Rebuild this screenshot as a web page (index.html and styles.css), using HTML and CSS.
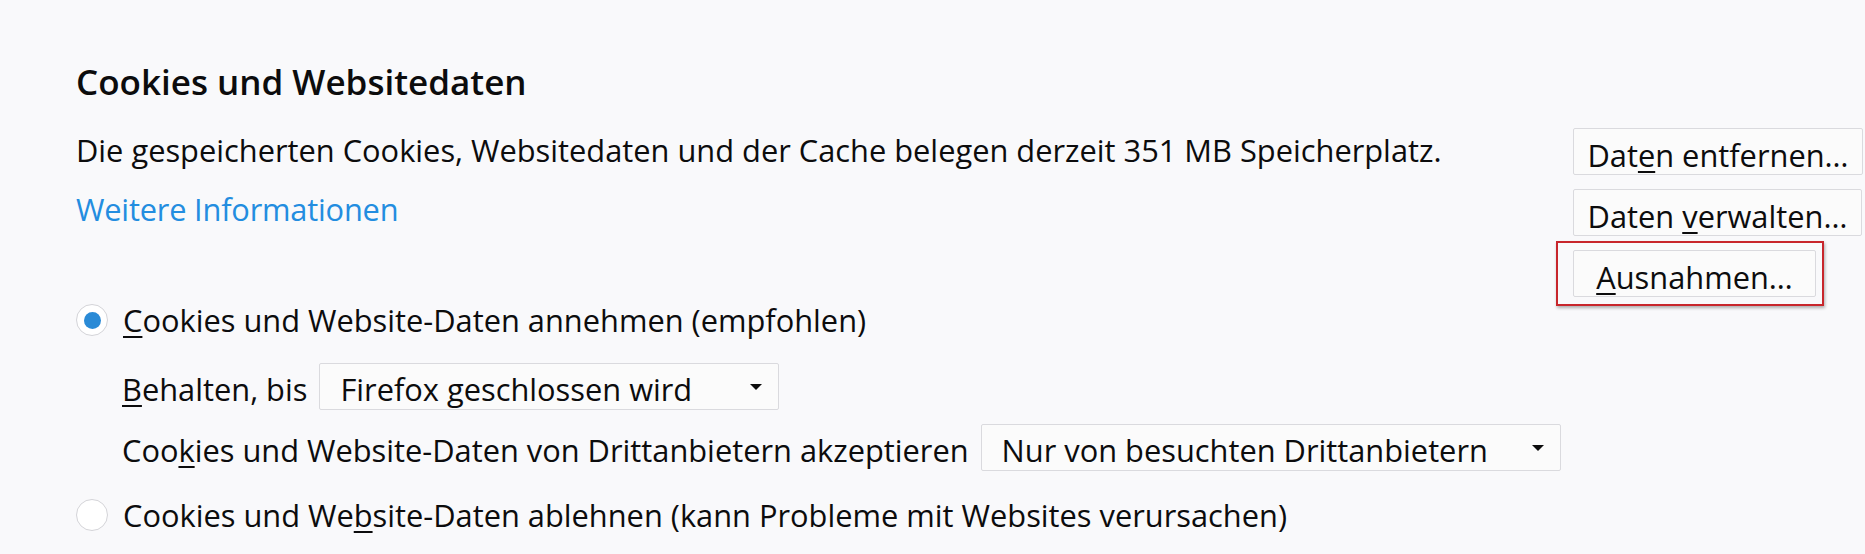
FILE: index.html
```html
<!DOCTYPE html>
<html lang="de">
<head>
<meta charset="utf-8">
<title>Cookies und Websitedaten</title>
<link rel="stylesheet" href="styles.css">
</head>
<body>
<section class="pane">
  <h2 class="pane-title">Cookies und Websitedaten</h2>
  <div class="summary">
    <div class="summary-text">
      <p class="desc">Die gespeicherten Cookies, Websitedaten und der Cache belegen derzeit 351 MB Speicherplatz.</p>
      <a class="link" href="#">Weitere Informationen</a>
    </div>
    <div class="actions">
      <button class="btn btn-wide">Dat<u>e</u>n entfernen…</button>
      <button class="btn btn-wide2">Daten <u>v</u>erwalten…</button>
      <div class="highlight">
        <button class="btn btn-narrow"><u>A</u>usnahmen…</button>
      </div>
    </div>
  </div>
  <div class="options">
    <label class="radio-row">
      <span class="radio checked"></span>
      <span class="radio-label"><u>C</u>ookies und Website-Daten annehmen (empfohlen)</span>
    </label>
    <div class="sub-row sub-first">
      <span class="sub-label"><u>B</u>ehalten, bis</span>
      <div class="dropdown dd-keep">
        <span class="dd-value">Firefox geschlossen wird</span>
        <svg class="dd-arrow" viewBox="0 0 12 6" width="12" height="6"><path d="M0 0h12L6 6z"/></svg>
      </div>
    </div>
    <div class="sub-row">
      <span class="sub-label">Coo<u>k</u>ies und Website-Daten von Drittanbietern akzeptieren</span>
      <div class="dropdown dd-third">
        <span class="dd-value">Nur von besuchten Drittanbietern</span>
        <svg class="dd-arrow" viewBox="0 0 12 6" width="12" height="6"><path d="M0 0h12L6 6z"/></svg>
      </div>
    </div>
    <label class="radio-row radio-last">
      <span class="radio"></span>
      <span class="radio-label">Cookies und We<u>b</u>site-Daten ablehnen (kann Probleme mit Websites verursachen)</span>
    </label>
  </div>
</section>
</body>
</html>
```

FILE: styles.css
```css
html, body {
  margin: 0;
  padding: 0;
}
body {
  background: #f9f9fb;
  color: #0c0c0d;
  font-family: "Open Sans", "Noto Sans", sans-serif;
  font-size: 30.8px;
  line-height: 40px;
  overflow: hidden;
}
u {
  text-decoration-thickness: 2px;
  text-underline-offset: 4px;
}
.pane {
  padding: 62px 0 0 76px;
}
.pane-title {
  margin: 0;
  font-size: 35px;
  font-weight: 600;
  line-height: 40px;
}
.summary {
  display: flex;
  margin-top: 26px;
}
.summary-text {
  flex: 1;
  padding-top: 2px;
}
.desc {
  margin: 0 0 19px;
}
.link {
  color: #238de0;
  text-decoration: none;
  letter-spacing: -0.2px;
}
.actions {
  width: 290px;
  margin-right: 2px;
  display: flex;
  flex-direction: column;
  align-items: flex-start;
  gap: 14px;
}
.btn {
  box-sizing: border-box;
  height: 47px;
  padding: 7px 0 0;
  margin: 0;
  font: inherit;
  line-height: 38px;
  color: #0c0c0d;
  background: #fbfbfb;
  border: 1px solid #dadade;
  border-radius: 2px;
  text-align: center;
}
.btn-wide { width: 290px; }
.btn-wide2 { width: 289px; }
.btn-narrow { width: 243px; }
.highlight {
  position: relative;
}
.highlight::after {
  content: "";
  position: absolute;
  top: -9px;
  right: -8px;
  bottom: -9px;
  left: -17px;
  border: 2px solid #c8262c;
  box-shadow: 1px 2px 3px rgba(0, 0, 0, 0.3);
  pointer-events: none;
}
.options {
  margin-top: 3px;
}
.radio-row {
  display: flex;
  align-items: center;
  height: 40px;
}
.radio {
  box-sizing: border-box;
  width: 32px;
  height: 32px;
  border-radius: 50%;
  border: 1px solid #d4d4d8;
  background: #fff;
  display: flex;
  align-items: center;
  justify-content: center;
  margin-right: 15px;
}
.radio.checked::before {
  content: "";
  width: 17px;
  height: 17px;
  border-radius: 50%;
  background: #2a8ad6;
}
.radio-last {
  margin-top: 24px;
}
.sub-row {
  display: flex;
  align-items: baseline;
  padding-left: 46px;
  margin-top: 14px;
}
.sub-first {
  margin-top: 23px;
}
.sub-label {
  margin-right: 12px;
}
.dropdown {
  box-sizing: border-box;
  height: 47px;
  padding: 6px 16px 0 20px;
  line-height: 38px;
  background: #fbfbfb;
  border: 1px solid #dadade;
  border-radius: 2px;
  display: flex;
  align-items: baseline;
  justify-content: space-between;
}
.dd-keep { width: 460px; }
.dd-third { width: 580px; }
.dd-arrow {
  fill: #0c0c0d;
  align-self: center;
  margin-top: -6px;
}
```
